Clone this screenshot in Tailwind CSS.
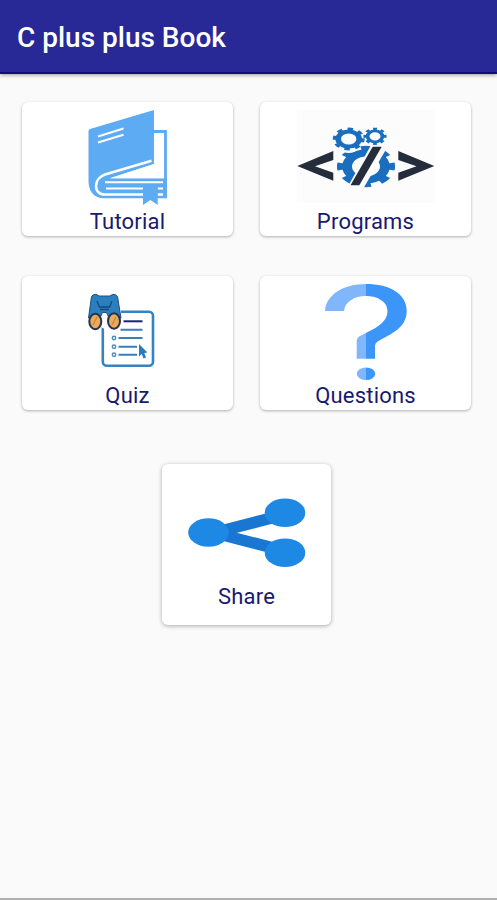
<!DOCTYPE html>
<html lang="en">
<head>
  <meta charset="UTF-8">
  <meta name="viewport" content="width=device-width, initial-scale=1.0">
  <title>C plus plus Book</title>
  <script src="https://cdn.jsdelivr.net/npm/@tailwindcss/browser@4"></script>
</head>
<body class="h-screen overflow-hidden flex flex-col bg-[#fafafa] font-[Roboto,sans-serif] text-[#191970] border-b-2 border-[#b0b0b0]">
  <header class="h-[74px] shrink-0 flex items-center pl-[17px] pt-1 bg-[#282896] border-b-2 border-[#120c80] shadow-[0_1px_4px_rgba(0,0,0,0.4)]">
    <h1 class="text-[28px] leading-8 font-medium text-white whitespace-nowrap">C plus plus Book</h1>
  </header>

  <main class="flex flex-col items-center pt-7">
    <div class="grid grid-cols-2 gap-x-[27px] gap-y-10 w-[449px] mr-1">
      <!-- Tutorial -->
      <a class="h-[134px] flex flex-col items-center bg-white rounded-md shadow-[0_1px_3px_rgba(0,0,0,0.3)]">
        <svg class="w-[211px] h-[106px] shrink-0" viewBox="22 102 211 106" fill="none">
          <path d="M153 131.500H165.500V197" stroke="#5dabf2" stroke-width="2.800"/>
          <path d="M88.500 131Q88.500 129.500 90 129L154 110V164L110 178.300H167V198.300H104C93 198.300 88.500 190 88.500 181Z" fill="#5dabf2"/>
          <path d="M154 164L110 178.300H164V164Z" fill="#fff"/>
          <path d="M151.500 160.700L105 174.500C93 178.500 93.500 194.300 104 194.500H143M157.500 194.500H163" stroke="#fff" stroke-width="2.600"/>
          <path d="M105 182.300H163M106 188.500H143M157.500 188.500H163" stroke="#fff" stroke-width="2"/>
          <path d="M98 136.500L123.500 128.500M98 142.500L123.500 134.700" stroke="#fff" stroke-width="2"/>
          <path d="M143 185H157.700V205L150.400 200L143 205Z" fill="#5dabf2"/>
        </svg>
        <span class="text-[22px] leading-7 tracking-[0.2px]">Tutorial</span>
      </a>

      <!-- Programs -->
      <a class="h-[134px] flex flex-col items-center bg-white rounded-md shadow-[0_1px_3px_rgba(0,0,0,0.3)]">
        <svg class="w-[211px] h-[106px] shrink-0" viewBox="260 102 211 106" fill="none">
          <rect x="297" y="110" width="138" height="93" fill="#fcfcfc"/>
          <g stroke="#1b6dbd">
            <g transform="translate(366 166.500) scale(1.400 1)">
              <circle r="13.500" stroke-width="7"/>
              <circle r="18.500" stroke-width="4.500" pathLength="16" stroke-dasharray="1 1" stroke-dashoffset=".5"/>
            </g>
            <circle cx="348.700" cy="139" r="14" fill="#fcfcfc" stroke="none"/>
            <g transform="translate(348.700 139) scale(1.400 1)">
              <circle r="7.500" stroke-width="4"/>
              <circle r="10" stroke-width="2.800" pathLength="16" stroke-dasharray="1 1" stroke-dashoffset=".2"/>
            </g>
            <g transform="translate(375 136.300) scale(1.350 1)">
              <circle r="5.500" stroke-width="2.800"/>
              <circle r="7.400" stroke-width="2.400" pathLength="16" stroke-dasharray="1 1" stroke-dashoffset=".5"/>
            </g>
          </g>
          <path d="M370.500 146H388L363 189H346.500Z" fill="#fcfcfc"/>
          <path d="M372.700 146.700H381.700L359.300 185.300H350.500Z" fill="#252c3c"/>
          <path d="M297.300 166L333.300 151V160L315 166.300L333.300 172.700V180.700Z" fill="#252c3c"/>
          <path d="M434.300 166L398.300 151V160L416.500 166.300L398.300 172.700V180.700Z" fill="#252c3c"/>
        </svg>
        <span class="text-[22px] leading-7 tracking-[0.2px]">Programs</span>
      </a>

      <!-- Quiz -->
      <a class="h-[134px] flex flex-col items-center bg-white rounded-md shadow-[0_1px_3px_rgba(0,0,0,0.3)]">
        <svg class="w-[211px] h-[106px] shrink-0" viewBox="22 276 211 106" fill="none">
          <rect x="102.800" y="311.800" width="50.200" height="54" rx="4" stroke="#3284c4" stroke-width="2.600"/>
          <path d="M118 309H121V326C119 331 106 331 101 327V309Z" fill="#fff"/>
          <path d="M123.500 321.300H142.500" stroke="#1b2080" stroke-width="2"/>
          <path d="M120.500 329.700H142.500M118.500 338H142.500M118.500 346.700H137M118.500 354.700H137" stroke="#3580bd" stroke-width="2"/>
          <g stroke="#4d90c8" stroke-width="1.500">
            <circle cx="114" cy="338" r="1.700"/>
            <circle cx="114" cy="346.700" r="1.700"/>
            <circle cx="114" cy="354.700" r="1.700"/>
          </g>
          <path d="M139 344L147.500 352.500L144.300 353L146 357.500L143.500 358.500L141.700 354L139 356.500Z" fill="#2b7cbb"/>
          <path d="M91.500 296.500Q95 292.500 99 296H110Q114 292.500 117.500 296.500L121 318H109L106.500 312.500H102.500L100 318H88.500Z" fill="#2b7fbf" stroke="#1c4f80"/>
          <path d="M97 301L99.500 307H109.500L112 301M100 309.500H109" stroke="#174a78" stroke-width="1.300"/>
          <ellipse cx="95.300" cy="321.500" rx="6" ry="7.700" fill="#eba95c" stroke="#233450" stroke-width="2"/>
          <ellipse cx="114" cy="321" rx="6" ry="7.700" fill="#eba95c" stroke="#233450" stroke-width="2"/>
          <path d="M93 325L97 317M112 325L116 317" stroke="#c98238" stroke-width="1.200"/>
        </svg>
        <span class="text-[22px] leading-7 tracking-[0.2px]">Quiz</span>
      </a>

      <!-- Questions -->
      <a class="h-[134px] flex flex-col items-center bg-white rounded-md shadow-[0_1px_3px_rgba(0,0,0,0.3)]">
        <svg class="w-[211px] h-[106px] shrink-0" viewBox="260 276 211 106">
          <path d="M325 311C326 295 343 284 366 284V296C354 296 345 302 344 311Z" fill="#80b7fc"/>
          <path d="M366 333L360 336Q356.700 337.800 356.700 341V358.700H366Z" fill="#80b7fc"/>
          <path d="M366 284C390 284 406.700 294 406.700 311C406.700 330 387 335 377 342Q375 343.500 375 346V358.700H366V333C376 328 387.500 322 387.500 311C387.500 302 378 296 366 296Z" fill="#3c96fa"/>
          <path d="M366 367.400A9.300 6.300 0 0 0 366 380Z" fill="#80b7fc"/>
          <path d="M366 367.400A9.300 6.300 0 0 1 366 380Z" fill="#3c96fa"/>
        </svg>
        <span class="text-[22px] leading-7 tracking-[0.2px]">Questions</span>
      </a>
    </div>

    <!-- Share -->
    <a class="w-[169px] h-[161px] mt-[54px] mr-1 flex flex-col items-center bg-white rounded-md shadow-[0_1px_4px_rgba(0,0,0,0.32)]">
      <svg class="w-[169px] h-[119px] shrink-0" viewBox="162 464 169 119">
        <path d="M285 514.500L214 532.800L285 551" fill="none" stroke="#1976d2" stroke-width="11.500"/>
        <g fill="#1e88e5">
          <ellipse cx="208.500" cy="532.500" rx="20.300" ry="14.300"/>
          <ellipse cx="285" cy="512.800" rx="20.300" ry="14.300"/>
          <ellipse cx="285" cy="552.700" rx="20.300" ry="14.300"/>
        </g>
      </svg>
      <span class="text-[22px] leading-7 tracking-[0.2px]">Share</span>
    </a>
  </main>
</body>
</html>
